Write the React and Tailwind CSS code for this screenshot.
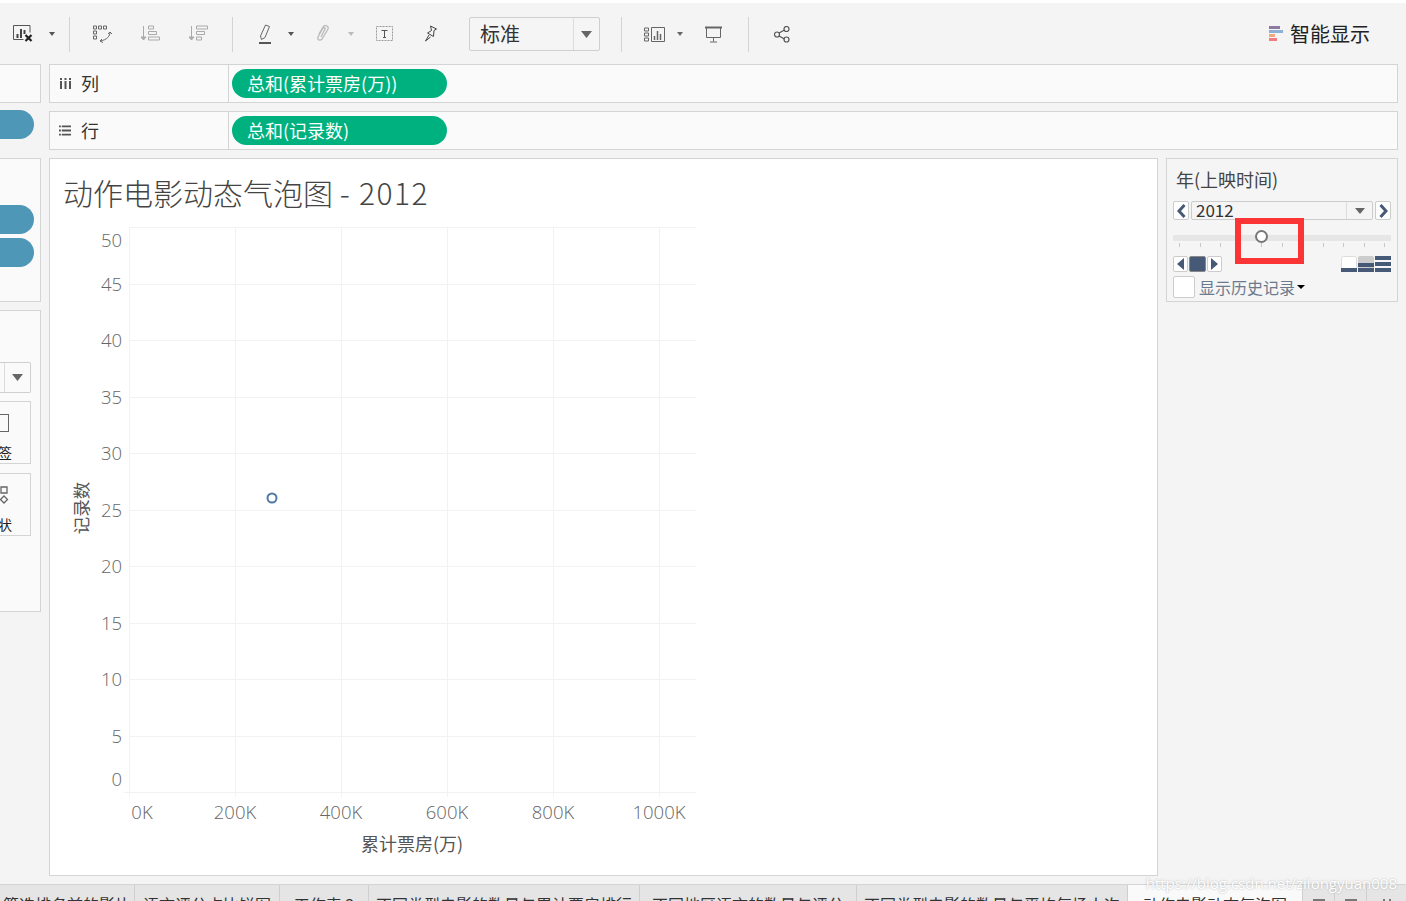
import React from 'react';

const CJK = { fontFamily: '"Noto Sans CJK SC", "Open Sans", sans-serif' };

const yTicks = [
    { label: '50', y: 227, text: 247 },
    { label: '45', y: 284, text: 291 },
    { label: '40', y: 340, text: 347 },
    { label: '35', y: 397, text: 404 },
    { label: '30', y: 453, text: 460 },
    { label: '25', y: 510, text: 517 },
    { label: '20', y: 566, text: 573 },
    { label: '15', y: 623, text: 630 },
    { label: '10', y: 679, text: 686 },
    { label: '5', y: 736, text: 743 },
    { label: '0', y: 792, text: 786 },
];

const xTicks = [
    { label: '0K', x: 130, tx: 142 },
    { label: '200K', x: 236, tx: 235 },
    { label: '400K', x: 342, tx: 341 },
    { label: '600K', x: 448, tx: 447 },
    { label: '800K', x: 554, tx: 553 },
    { label: '1000K', x: 660, tx: 659 },
];

const tabs = [
    { label: '筛选排名前的影片', w: 'w-[135px]' },
    { label: '语言评分占比饼图', w: 'w-[145px]' },
    { label: '工作表 3', w: 'w-[89px]' },
    { label: '不同类型电影的数量与累计票房排行', w: 'w-[271px]' },
    { label: '不同地区语言的数量与评分', w: 'w-[217px]' },
    { label: '不同类型电影的数量与平均每场人次', w: 'w-[271px]' },
    { label: '动作电影动态气泡图', w: 'w-[175px]', active: true },
];

const Divider = () => <div className="w-px h-[35px] bg-[#d4d4d4]"></div>;

const Caret = ({ className = '' }) => (
    <svg width="6" height="4" viewBox="0 0 6 4" className={className}>
        <path d="M0 0h6L3 4z" fill="currentColor" />
    </svg>
);

const ToolIcon = ({ children, w = 22 }) => (
    <svg width={w} height="22" viewBox={`0 0 ${w} 22`} fill="none" stroke="#666" strokeWidth="1">
        {children}
    </svg>
);

const Toolbar = () => (
    <div className="h-[61px] bg-[#f4f4f4] flex items-center relative">
        <div className="flex items-center h-[35px] mt-[1px] text-[#555]">
            <div className="ml-[12px] w-[22px]">
                <ToolIcon>
                    <path d="M1.500 2.500h16.500v7M1.500 2.500v14h10" stroke="#555" />
                    <path d="M5.500 15v-4M9 15V6M12.500 11V7" stroke="#444" strokeWidth="2" />
                    <path d="M13.500 12l6 6M19.500 12l-6 6" stroke="#222" strokeWidth="2.200" />
                </ToolIcon>
            </div>
            <Caret className="ml-[15px] text-[#555]" />
            <div className="ml-[14px]"><Divider /></div>
            <div className="ml-[22px]">
                <ToolIcon>
                    <path d="M1.500 3h3v3h-3zM6.500 3h3v3h-3zM11.500 3h3v3h-3zM1.500 8h3v3h-3zM1.500 13h3v3h-3z" />
                    <path d="M18 9c0 4-3 8-10 9M10 16l-2 2 3 1.500M16 11l2-2 2 2" />
                </ToolIcon>
            </div>
            <div className="ml-[26px]">
                <ToolIcon>
                    <g stroke="#aaa">
                        <path d="M3.500 3v13" />
                        <path d="M1 14l2.500 3 2.500-3z" fill="#aaa" />
                        <path d="M8.500 3h5v3h-5zM8.500 8.500h8v3h-8zM8.500 14h11v3h-11z" />
                    </g>
                </ToolIcon>
            </div>
            <div className="ml-[26px]">
                <ToolIcon>
                    <g stroke="#aaa">
                        <path d="M3.500 3v13" />
                        <path d="M1 14l2.500 3 2.500-3z" fill="#aaa" />
                        <path d="M8.500 3h11v3h-11zM8.500 8.500h8v3h-8zM8.500 14h5v3h-5z" />
                    </g>
                </ToolIcon>
            </div>
            <div className="ml-[22px]"><Divider /></div>
            <div className="ml-[25px] w-[14px]">
                <svg width="14" height="22" viewBox="0 0 14 22" fill="none" stroke="#666">
                    <path d="M2.500 13L7.500 2l4 1.500L7 14.500l-3.500 2z" />
                    <path d="M1 20h12" stroke="#555" strokeWidth="2" />
                </svg>
            </div>
            <Caret className="ml-[16px] text-[#555]" />
            <div className="ml-[21px] w-[16px]">
                <svg width="16" height="22" viewBox="0 0 16 22" fill="none" stroke="#bbb" strokeWidth="1.300">
                    <path d="M4 11l4-7c2-3 6-1 5 2l-6 10c-2 2-5 1-4-2l5-9c1-1 3 0 2 1l-4 8" />
                </svg>
            </div>
            <Caret className="ml-[17px] text-[#bbb]" />
            <div className="ml-[22px]">
                <svg width="18" height="16" viewBox="0 0 18 16" fill="none">
                    <rect x="0.500" y="0.500" width="16" height="14" stroke="#999" strokeDasharray="2 1" />
                    <path d="M5.500 4.500h6M8.500 4.500v7M7 11.500h3" stroke="#555" />
                </svg>
            </div>
            <div className="ml-[30px]">
                <svg width="14" height="18" viewBox="0 0 14 18" fill="none" stroke="#444">
                    <path d="M6.500 1l6 3-2.500 1.500-.5 6-6-3.500 4-2.500z" />
                    <path d="M5 10l-3.500 6 5-4" />
                </svg>
            </div>
            <div className="ml-[31px] w-[131px] h-[34px] bg-[#f5f5f5] border border-[#cfcfcf] rounded-[2px] flex" style={CJK}>
                <div className="flex-1 pl-[10px] text-[20px] leading-[32px] text-[#333]">标准</div>
                <div className="w-[26px] border-l border-[#dcdcdc] flex items-center justify-center">
                    <svg width="11" height="7" viewBox="0 0 11 7"><path d="M0 0h11L5.500 7z" fill="#666" /></svg>
                </div>
            </div>
            <div className="ml-[21px]"><Divider /></div>
            <div className="ml-[22px]">
                <svg width="21" height="15" viewBox="0 0 21 15" fill="none" stroke="#666">
                    <path d="M.5 1h4v3h-4zM.5 6h4v3h-4zM.5 11h4v3h-4zM7.500.5h13v14h-13z" />
                    <path d="M10.500 13V9M13.500 13V4M16.500 13V7" strokeWidth="1.500" />
                </svg>
            </div>
            <Caret className="ml-[12px] text-[#666]" />
            <div className="ml-[22px]">
                <svg width="17" height="17" viewBox="0 0 17 17" fill="none" stroke="#666">
                    <path d="M0 1.500h17" strokeWidth="2" />
                    <path d="M1.500 2v9.500h14V2M8.500 11.500V15.500M5 16h7" />
                </svg>
            </div>
            <div className="ml-[26px]"><Divider /></div>
            <div className="ml-[25px]">
                <svg width="16" height="17" viewBox="0 0 16 17" fill="none" stroke="#555" strokeWidth="1.200">
                    <circle cx="3" cy="8.500" r="2.500" />
                    <circle cx="12.500" cy="3" r="2.500" />
                    <circle cx="12.500" cy="13.500" r="2.500" />
                    <path d="M5 7l5.500-3M5 10l5.500 3" />
                </svg>
            </div>
        </div>
        <div className="ml-auto mr-[36px] flex items-center gap-[7px]">
            <svg width="14" height="15" viewBox="0 0 14 15">
                <rect y="0" width="11" height="3" fill="#8c7aa0" />
                <rect y="4" width="14" height="3" fill="#8fb0d6" />
                <rect y="8" width="6" height="3" fill="#f0a97f" />
                <rect y="12" width="8" height="3" fill="#f47c80" />
            </svg>
            <span className="text-[20px] leading-[28px] text-[#222]" style={CJK}>智能显示</span>
        </div>
    </div>
);

const Shelf = ({ icon, label, pill }) => (
    <div className="h-[39px] border border-[#d4d4d4] bg-[#fafafa] flex">
        <div className="w-[179px] border-r border-[#d4d4d4] flex items-center pl-[9px]">
            <span className="w-[12px] flex justify-center">{icon}</span>
            <span className="ml-[10px] text-[18px] text-[#333]" style={CJK}>{label}</span>
        </div>
        <div className="flex items-center pl-[3px]">
            <div className="w-[215px] h-[29px] rounded-full bg-[#00b180] text-white text-[18px] leading-[28px] pl-[15px] whitespace-nowrap" style={CJK}>
                {pill}
            </div>
        </div>
    </div>
);

const LeftRail = () => (
    <div className="w-[41px] shrink-0 flex flex-col" style={CJK}>
        <div className="h-[39px] border border-l-0 border-[#d4d4d4] bg-[#fafafa]"></div>
        <div className="h-[47px] relative">
            <div className="absolute right-[7px] top-[7px] w-[40px] h-[29px] rounded-r-full bg-[#4f97b6]"></div>
        </div>
        <div className="h-[144px] mt-[8px] border border-l-0 border-[#d4d4d4] bg-[#fafafa] pt-[46px] flex flex-col gap-[4px] items-end pr-[6px]">
            <div className="w-[34px] h-[29px] rounded-r-full bg-[#4f97b6]"></div>
            <div className="w-[34px] h-[29px] rounded-r-full bg-[#4f97b6]"></div>
        </div>
        <div className="h-[302px] mt-[8px] border border-l-0 border-[#d4d4d4] bg-[#fafafa] pt-[51px] pr-[9px]">
            <div className="h-[31px] border border-l-0 border-[#cfcfcf] rounded-r-[2px] flex justify-end">
                <div className="w-[26px] border-l border-[#dcdcdc] flex items-center justify-center">
                    <svg width="11" height="7" viewBox="0 0 11 7"><path d="M0 0h11L5.500 7z" fill="#666" /></svg>
                </div>
            </div>
            <div className="h-[63px] mt-[8px] border border-l-0 border-[#d4d4d4] flex flex-col">
                <div className="mt-[12px] w-[9px] h-[18px] border border-l-0 border-[#666]"></div>
                <div className="w-[12px] overflow-hidden mt-[11px] text-[14px] leading-[18px] text-[#222] flex justify-end">
                    <span className="shrink-0">签</span>
                </div>
            </div>
            <div className="h-[63px] mt-[9px] border border-l-0 border-[#d4d4d4] flex flex-col">
                <svg width="9" height="20" viewBox="0 0 9 20" fill="none" stroke="#666" strokeWidth="1.300" className="mt-[12px]">
                    <path d="M1 1h6v6H1zM4 10l3.500 3.500L4 17 .500 13.500z" />
                </svg>
                <div className="w-[12px] overflow-hidden mt-[9px] text-[14px] leading-[18px] text-[#222] flex justify-end">
                    <span className="shrink-0">状</span>
                </div>
            </div>
        </div>
    </div>
);

// coordinates in this drawing are page coordinates, the svg sits at x=50 y=159
const BubbleChart = () => (
    <svg width="1107" height="716" viewBox="50 159 1107 716" className="block" style={{ fontFamily: '"Open Sans", "Noto Sans", sans-serif' }}>
        {yTicks.map(t => (
            <g key={t.label}>
                <path d={`M${t.label === '0' ? 124 : 130} ${t.y + 0.5}H696`} stroke="#f2f2f2" />
                <text x="122" y={t.text} textAnchor="end" fontSize="18.5" fontWeight="300" fill="#666">{t.label}</text>
            </g>
        ))}
        {xTicks.map(t => (
            <g key={t.label}>
                <path d={`M${t.x - 0.5} 227V797`} stroke="#f2f2f2" />
                <text x={t.tx} y="819" textAnchor="middle" fontSize="18.5" fontWeight="300" fill="#666">{t.label}</text>
            </g>
        ))}
        <circle cx="272" cy="498" r="4.500" fill="#fff" stroke="#4e79a7" strokeWidth="2" />
        <text transform="translate(88 508) rotate(-90)" textAnchor="middle" fontSize="17.500" fill="#555" style={CJK}>记录数</text>
        <text x="412" y="851" textAnchor="middle" fontSize="18" fill="#555" style={CJK}>累计票房(万)</text>
    </svg>
);

const ChartCard = () => (
    <div className="flex-1 h-[718px] border border-[#d4d4d4] bg-white relative">
        <div className="absolute left-[13px] top-[14px] text-[30px] leading-[38px] font-light text-[#444] whitespace-nowrap" style={CJK}>
            动作电影动态气泡图 <span className="tracking-[1.400px]">- 2012</span>
        </div>
        <BubbleChart />
    </div>
);

const FilterCard = () => (
    <div className="w-[232px] h-[144px] border border-[#d4d4d4] bg-[#f5f5f5] px-[6px] relative" style={CJK}>
        <div className="pl-[3px] pt-[7px] text-[18px] leading-[26px] text-[#444]">年(上映时间)</div>
        <div className="mt-[9px] flex gap-[2px] h-[19px]">
            <div className="w-[16px] border border-[#ccc] rounded-[2px] bg-white flex items-center justify-center">
                <svg width="9" height="14" viewBox="0 0 9 14" fill="none" stroke="#465a78" strokeWidth="3"><path d="M7.500 1L2 7l5.500 6" /></svg>
            </div>
            <div className="flex-1 border border-[#ccc] rounded-[2px] flex">
                <div className="flex-1 pl-[4px] text-[17px] leading-[15px] text-[#333]">2012</div>
                <div className="w-[26px] border-l border-[#ddd] flex items-center justify-center">
                    <svg width="10" height="6" viewBox="0 0 10 6"><path d="M0 0h10L5 6z" fill="#666" /></svg>
                </div>
            </div>
            <div className="w-[16px] border border-[#ccc] rounded-[2px] bg-white flex items-center justify-center">
                <svg width="9" height="14" viewBox="0 0 9 14" fill="none" stroke="#465a78" strokeWidth="3"><path d="M1.500 1L7 7l-5.500 6" /></svg>
            </div>
        </div>
        <svg width="218" height="13" viewBox="0 0 218 13" className="mt-[15px] block">
            <rect x="0" y="0" width="218" height="6" fill="#e6e6e6" />
            {[6, 27, 47, 88, 109, 130, 150, 170, 191, 211].map(x => (
                <path key={x} d={`M${x + 0.5} 8v4`} stroke="#c8c8c8" />
            ))}
        </svg>
        <div className="mt-[8px] flex justify-between h-[16px]">
            <div className="flex gap-[1px]">
                <div className="w-[15px] border border-[#ccc] rounded-[2px] bg-white flex items-center justify-center">
                    <svg width="7" height="12" viewBox="0 0 7 12"><path d="M7 0v12L0 6z" fill="#465a78" /></svg>
                </div>
                <div className="w-[17px] border border-[#888] rounded-[2px] bg-[#465a78]"></div>
                <div className="w-[15px] border border-[#ccc] rounded-[2px] bg-white flex items-center justify-center">
                    <svg width="7" height="12" viewBox="0 0 7 12"><path d="M0 0v12l7-6z" fill="#465a78" /></svg>
                </div>
            </div>
            <svg width="50" height="16" viewBox="0 0 50 16">
                <rect x=".5" y=".5" width="15" height="15" rx="2" fill="#fff" stroke="#ddd" />
                <rect y="12" width="16" height="4" fill="#465a78" />
                <rect x="17" width="16" height="16" rx="2" fill="#ccc" />
                <rect x="17" y="7" width="16" height="4" fill="#465a78" />
                <rect x="17" y="12" width="16" height="4" fill="#465a78" />
                <rect x="34" width="16" height="4" fill="#465a78" />
                <rect x="34" y="6" width="16" height="4" fill="#465a78" />
                <rect x="34" y="12" width="16" height="4" fill="#465a78" />
            </svg>
        </div>
        <div className="mt-[4px] flex items-center">
            <div className="w-[22px] h-[22px] border border-[#ccc] rounded-[2px] bg-white"></div>
            <span className="ml-[4px] text-[16px] leading-[20px] text-[#6b7a8c]">显示历史记录</span>
            <svg width="8" height="4" viewBox="0 0 8 4" className="ml-[2px] text-black"><path d="M0 0h8L4 4z" fill="currentColor" /></svg>
        </div>
        {/* red box drawn over the slider */}
        <div className="absolute left-[68px] top-[59px] w-[69px] h-[46px] border-[6px] border-[#fb3535] pointer-events-none"></div>
        <div className="absolute left-[88px] top-[71px] w-[13px] h-[13px] rounded-full bg-white border-2 border-[#777]"></div>
    </div>
);

const TabBar = () => (
    <div className="h-[17px] border-t border-[#d4d4d4] flex overflow-hidden text-[16px] leading-[24px] text-[#333]" style={CJK}>
        {tabs.map((tab, i) => (
            <div
                key={i}
                className={`${tab.w} shrink-0 border-r border-[#cfcfcf] pt-[7px] text-center whitespace-nowrap overflow-hidden ${tab.active ? 'bg-[#fafafa]' : 'bg-[#e5e5e5]'}`}
            >
                {tab.label}
            </div>
        ))}
        <div className="w-[32px] shrink-0 border-r border-[#cfcfcf] bg-[#e5e5e5] flex justify-center pt-[14px]">
            <svg width="12" height="2" viewBox="0 0 12 2"><path d="M0 0h12v2H0z" fill="#777" /></svg>
        </div>
        <div className="w-[32px] shrink-0 border-r border-[#cfcfcf] bg-[#e5e5e5] flex justify-center pt-[14px]">
            <svg width="12" height="2" viewBox="0 0 12 2"><path d="M0 0h12v2H0z" fill="#777" /></svg>
        </div>
        <div className="w-[39px] shrink-0 bg-[#e5e5e5] flex justify-center pt-[14px]">
            <svg width="12" height="2" viewBox="0 0 12 2"><path d="M2 0h2v2H2zM8 0h2v2H8z" fill="#777" /></svg>
        </div>
    </div>
);

const App = () => {
    return (
        <div className="w-[1406px] h-[901px] overflow-hidden bg-[#f4f4f4] relative">
            <div className="h-[3px] bg-white"></div>
            <Toolbar />
            <div className="flex h-[820px]">
                <LeftRail />
                <div className="ml-[8px] w-[1349px] flex flex-col">
                    <Shelf
                        label="列"
                        pill="总和(累计票房(万))"
                        icon={<svg width="11" height="11" viewBox="0 0 11 11" fill="#555"><path d="M0 0h2v2H0zM4.500 0h2v2h-2zM9 0h2v2H9zM0 3h2v8H0zM4.500 3h2v8h-2zM9 3h2v8H9z" /></svg>}
                    />
                    <div className="h-[8px]"></div>
                    <Shelf
                        label="行"
                        pill="总和(记录数)"
                        icon={<svg width="13" height="11" viewBox="0 0 13 11" fill="#555"><path d="M0 0h2v2H0zM3 0h10v2H3zM0 4.500h2v2H0zM3 4.500h10v2H3zM0 9h2v2H0zM3 9h10v2H3z" /></svg>}
                    />
                    <div className="flex gap-[8px] mt-[8px]">
                        <ChartCard />
                        <FilterCard />
                    </div>
                </div>
            </div>
            <TabBar />
            <div className="absolute right-[9px] top-[873px] text-[15px] leading-[20px] text-white [text-shadow:0_0_2px_#aaa] whitespace-nowrap" style={{ fontFamily: '"Open Sans", sans-serif' }}>
                https://blog.csdn.net/zilongyuan008
            </div>
        </div>
    );
};

export default App;
